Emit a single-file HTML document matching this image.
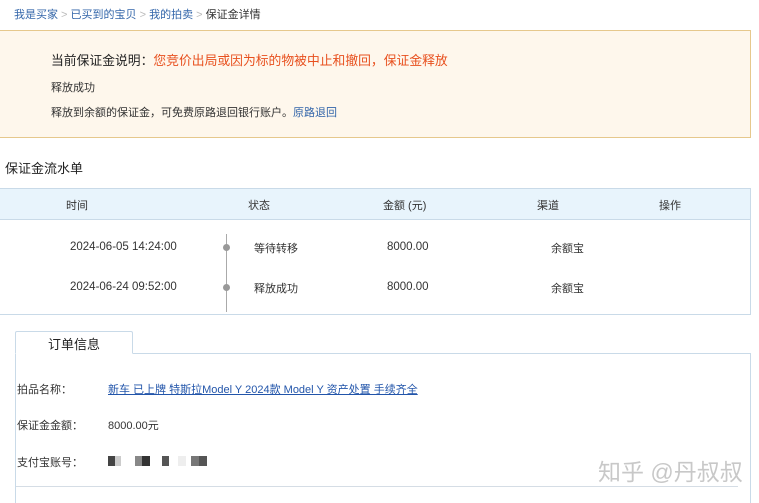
<!DOCTYPE html>
<html><head><meta charset="utf-8"><style>
*{margin:0;padding:0;box-sizing:border-box}
body{width:759px;height:500px;background:#fff;font-family:"Liberation Sans","Noto Sans CJK SC",sans-serif;font-size:11px;color:#333;position:relative;overflow:hidden}
.a{position:absolute;white-space:nowrap}
.blue{color:#3366aa}
.n{font-size:11.5px}
</style></head><body>
<div class="a" style="left:14px;top:6px;font-size:11px;"><span class="blue">我是买家</span><span style="color:#bbb"> &gt; </span> <span class="blue">已买到的宝贝</span><span style="color:#bbb"> &gt; </span> <span class="blue">我的拍卖</span><span style="color:#bbb"> &gt; </span> <span>保证金详情</span></div>

<div class="a" style="left:-1px;top:30px;width:752px;height:108px;background:#fef7ec;border:1px solid #e6c88c"></div>
<div class="a" style="left:51px;top:50px;font-size:12.8px;color:#222">当前保证金说明：<span style="color:#e8501e">您竞价出局或因为标的物被中止和撤回，保证金释放</span></div>
<div class="a" style="left:51px;top:79px;">释放成功</div>
<div class="a" style="left:51px;top:104px;">释放到余额的保证金，可免费原路退回银行账户。<span class="blue">原路退回</span></div>

<div class="a" style="left:5px;top:158px;font-size:13px;color:#222">保证金流水单</div>

<div class="a" style="left:-1px;top:188px;width:752px;height:127px;border:1px solid #c9dae8"></div>
<div class="a" style="left:0;top:189px;width:750px;height:31px;background:#e8f4fc;border-bottom:1px solid #c9dae8"></div>
<div class="a" style="left:66px;top:197px;">时间</div>
<div class="a" style="left:248px;top:197px;">状态</div>
<div class="a" style="left:383px;top:197px;">金额 (元)</div>
<div class="a" style="left:537px;top:197px;">渠道</div>
<div class="a" style="left:659px;top:197px;">操作</div>

<div class="a" style="left:226px;top:234px;width:1px;height:78px;background:#aaa"></div>
<div class="a" style="left:223px;top:244px;width:7px;height:7px;border-radius:50%;background:#999"></div>
<div class="a" style="left:223px;top:284px;width:7px;height:7px;border-radius:50%;background:#999"></div>
<div class="a n" style="left:70px;top:241px;">2024-06-05 14:24:00</div>
<div class="a" style="left:254px;top:240px;">等待转移</div>
<div class="a n" style="left:387px;top:241px;">8000.00</div>
<div class="a" style="left:551px;top:240px;">余额宝</div>
<div class="a n" style="left:70px;top:281px;">2024-06-24 09:52:00</div>
<div class="a" style="left:254px;top:280px;">释放成功</div>
<div class="a n" style="left:387px;top:281px;">8000.00</div>
<div class="a" style="left:551px;top:280px;">余额宝</div>

<div class="a" style="left:15px;top:353px;width:736px;height:150px;border:1px solid #c9dae8;border-bottom:none"></div>
<div class="a" style="left:15px;top:331px;width:118px;height:23px;border:1px solid #c9dae8;border-bottom:1px solid #fff;background:#fff;border-radius:2px 2px 0 0"></div>
<div class="a" style="left:48px;top:334px;font-size:13px;color:#222">订单信息</div>

<div class="a" style="left:17px;top:381px;">拍品名称：</div>
<div class="a" style="left:108px;top:381px;color:#2255aa;text-decoration:underline">新车 已上牌 特斯拉Model Y 2024款 Model Y 资产处置 手续齐全</div>
<div class="a" style="left:17px;top:417px;">保证金金额：</div>
<div class="a" style="left:108px;top:417px;">8000.00元</div>
<div class="a" style="left:17px;top:454px;">支付宝账号：</div>
<div class="a" style="left:108px;top:456px;width:7px;height:10px;background:#444"></div>
<div class="a" style="left:115px;top:456px;width:6px;height:10px;background:#ccc"></div>
<div class="a" style="left:135px;top:456px;width:7px;height:10px;background:#888"></div>
<div class="a" style="left:142px;top:456px;width:8px;height:10px;background:#333"></div>
<div class="a" style="left:162px;top:456px;width:7px;height:10px;background:#555"></div>
<div class="a" style="left:178px;top:456px;width:8px;height:10px;background:#eee"></div>
<div class="a" style="left:191px;top:456px;width:8px;height:10px;background:#777"></div>
<div class="a" style="left:199px;top:456px;width:8px;height:10px;background:#555"></div>
<div class="a" style="left:16px;top:486px;width:722px;height:1px;background:#d5dde5"></div>

<div class="a" style="left:598px;top:453px;font-size:23px;color:#c8c8c8">知乎 @丹叔叔</div>
</body></html>
